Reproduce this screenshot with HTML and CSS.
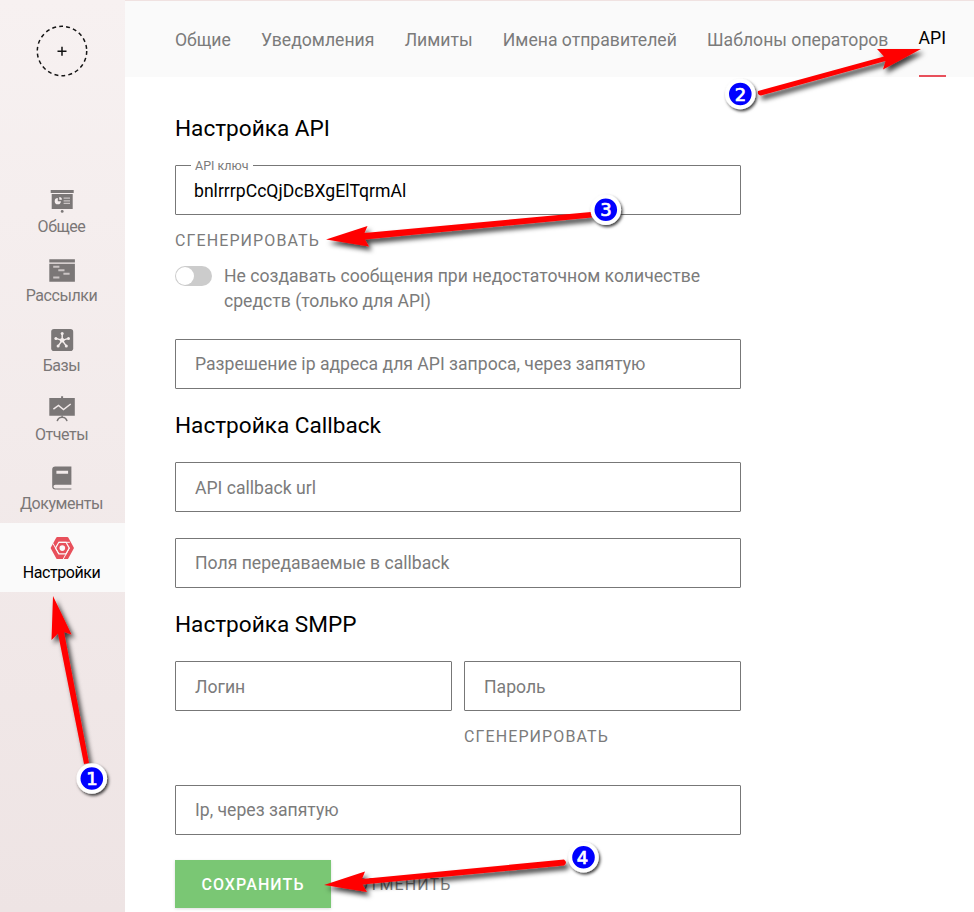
FILE: index.html
```html
<!DOCTYPE html>
<html lang="ru">
<head>
<meta charset="utf-8">
<title>Настройки — API</title>
<link rel="stylesheet" href="styles.css">
</head>
<body>
<div class="app">
  <aside class="sidebar">
    <button class="add" aria-label="Добавить">
      <svg width="52" height="52" viewBox="0 0 52 52"><circle cx="26" cy="26" r="24.7" fill="none" stroke="#151515" stroke-width="1.5" stroke-dasharray="3.9 3.15"/><path d="M21.5 26.3h9M26 21.8v9" stroke="#111" stroke-width="1.5"/></svg>
    </button>
    <nav class="menu">
      <a class="item">
        <svg width="26" height="26" viewBox="0 0 26 26"><path fill="#7b7777" d="M1.7 2h23v3h-23zM2.700 6h21v15h-21z"/><circle cx="13.200" cy="23.400" r="1.400" fill="#7b7777"/><path fill="#f5eeee" d="M8.8 10.1v3.1h3.1a3.1 3.1 0 1 1-3.1-3.1zM10.3 9a2.7 2.7 0 0 1 2.6 2.8h-2.6z"/><path d="M14.600 10.200H21M14.600 12.800H21M14.600 15.400H21" stroke="#c9c3c3" stroke-width="1.3"/></svg>
        <span>Общее</span>
      </a>
      <a class="item">
        <svg width="26" height="26" viewBox="0 0 26 26"><path fill="#7b7777" d="M.3 2.200h25.600v3.300H.3zM.3 6.800h25.600v18H.3z"/><path d="M4.200 9.700h6.200M9.300 13.200h6.200M14.400 16.700h6.200M4.200 20.500h6.200" stroke="#cbc5c5" stroke-width="1.9"/></svg>
        <span>Рассылки</span>
      </a>
      <a class="item">
        <svg width="26" height="26" viewBox="0 0 26 26"><rect x="2.200" y="2" width="22" height="22" rx="2.800" fill="#7b7777"/><path d="M13.200 13.400V6.500M13.200 13.400l-6.300-2M13.200 13.400l6.300-2M13.200 13.400l-4 5.500M13.200 13.400l4 5.500" stroke="#f4edec" stroke-width="1.500"/><g fill="#f4edec"><circle cx="13.200" cy="13.200" r="2.300"/><circle cx="13.200" cy="6.500" r="1.500"/><circle cx="6.900" cy="11.400" r="1.500"/><circle cx="19.500" cy="11.400" r="1.500"/><circle cx="9.100" cy="19" r="1.500"/><circle cx="17.300" cy="19" r="1.500"/></g></svg>
        <span>Базы</span>
      </a>
      <a class="item">
        <svg width="26" height="26" viewBox="0 0 26 26"><path fill="#7b7777" d="M12.100.2h2V2h11.700v17.700H.3V2h11.800z"/><path d="M4.400 13.100l5.100-3.700 5 4.100 7.200-5.500" fill="none" stroke="#f1eaea" stroke-width="1.500"/><path d="M13.100 19.500v2M8.200 25.200c.6-2.600 2.500-4 4.900-4s4.300 1.400 4.900 4" fill="none" stroke="#7b7777" stroke-width="1.500"/></svg>
        <span>Отчеты</span>
      </a>
      <a class="item">
        <svg width="26" height="26" viewBox="0 0 26 26"><path fill="#7b7777" fill-rule="evenodd" d="M6.200 1.400h16.200v18.400H6.400c-1.300 0-1.900.9-1.900 1.800 0 1.300.8 1.900 1.900 1.900h16v1H6.200c-1.900 0-3-1.200-3-3V4.300c0-1.800 1.100-2.900 3-2.900zM7.400 5.700v3h11.700v-3z"/></svg>
        <span>Документы</span>
      </a>
      <a class="item active">
        <svg width="26" height="26" viewBox="0 0 26 26"><path fill="#e8505b" stroke="#e8505b" stroke-width="2" stroke-linejoin="round" d="M8.200 3h10.200l5.500 10-5.500 10H8.200L2.700 13z"/><path d="M9.800 7.300h7.200l3.300 5.800-3.300 5.800H9.800L6.500 13.100z" fill="none" stroke="#fafafa" stroke-width="1.200"/><path d="M9.800 7.300h11M20.300 13.100l-6 10.900M9.800 18.900L3.900 8.300" fill="none" stroke="#fafafa" stroke-width="1"/><circle cx="13.300" cy="13.100" r="2.800" fill="#fafafa"/></svg>
        <span>Настройки</span>
      </a>
    </nav>
  </aside>
  <main class="main">
    <nav class="tabs">
      <a>Общие</a><a>Уведомления</a><a>Лимиты</a><a>Имена отправителей</a><a>Шаблоны операторов</a><a class="current">API</a>
    </nav>
    <form class="form">
      <h2>Настройка API</h2>
      <div class="field filled"><span class="legend">API ключ</span>bnlrrrpCcQjDcBXgElTqrmAl</div>
      <a class="link key-link">СГЕНЕРИРОВАТЬ</a>
      <div class="toggle-row">
        <span class="switch"></span>
        <span>Не создавать сообщения при недостаточном количестве<br>средств (только для API)</span>
      </div>
      <div class="field">Разрешение ip адреса для API запроса, через запятую</div>
      <h2 class="callback-title">Настройка Callback</h2>
      <div class="field low">API callback url</div>
      <div class="field spaced">Поля передаваемые в callback</div>
      <h2 class="smpp-title">Настройка SMPP</h2>
      <div class="pair">
        <div class="field low">Логин</div>
        <div>
          <div class="field low">Пароль</div>
          <a class="link">СГЕНЕРИРОВАТЬ</a>
        </div>
      </div>
      <div class="field ip">Ip, через запятую</div>
      <div class="actions"><button type="button" class="save">СОХРАНИТЬ</button><a class="link cancel">ОТМЕНИТЬ</a></div>
    </form>
  </main>
  <svg class="notes" width="974" height="912" viewBox="0 0 974 912">
    <defs>
      <filter id="shadow" x="-30%" y="-60%" width="170%" height="240%"><feDropShadow dx="3" dy="4" stdDeviation="2.5" flood-color="#000" flood-opacity=".75"/></filter>
      <filter id="soft" x="-40%" y="-40%" width="190%" height="190%"><feDropShadow dx="1.5" dy="2" stdDeviation="1.8" flood-color="#000" flood-opacity=".75"/></filter>
    </defs>
    <g fill="#f00" filter="url(#shadow)">
      <path d="M53 596L71.500 634.500L64 632L89 763L84 764L58 633.500L51.500 640z"/>
      <path d="M921 49L883 69.500L885.500 61L761 95.500Q757 95 758 91L884 56.500L877 49z"/>
      <path d="M326 239.500L367.500 226L364.500 233L591 212L592 217.500L365 239.500L369 246.500z"/>
      <path d="M324 885L365 871.500L362 879L564 859.500Q568 862.500 564 865.500L362.500 884.500L367 892z"/>
    </g>
    <g fill="#00f" stroke="#fff" stroke-width="4" filter="url(#soft)">
      <circle cx="91.800" cy="778.500" r="13.300"/><circle cx="740.300" cy="94" r="13.300"/><circle cx="605.800" cy="209.700" r="13.300"/><circle cx="583.500" cy="857.300" r="13.300"/>
    </g>
    <g class="numbers"><text x="92" y="785">1</text><text x="740.500" y="100.500">2</text><text x="606" y="216">3</text><text x="582.500" y="863.500">4</text></g>
  </svg>
</div>
</body>
</html>
```
FILE: styles.css
```css
* { box-sizing: border-box; }
body { margin: 0; background: #fff; font-family: Roboto, "Liberation Sans", sans-serif; color: #7b7b7b; overflow: hidden; }
.app { position: relative; display: flex; width: 974px; height: 912px; overflow: hidden; }
.sidebar { width: 125px; flex: none; background: linear-gradient(#f7f1f1, #eee4e4); display: flex; flex-direction: column; align-items: center; padding-top: 25px; }
.add { border: 0; background: none; padding: 0; width: 52px; height: 52px; margin-right: 2px; }
.add svg, .item svg { display: block; }
.menu { width: 100%; margin-top: 99px; }
.item { height: 69.300px; display: flex; flex-direction: column; align-items: center; padding: 12px 2px 0 0; font-size: 16px; letter-spacing: -.45px; line-height: 20px; color: #7b7777; }
.item svg { margin-bottom: 3px; }
.item.active { margin-top: 1px; height: 69px; background: #fafafa; color: #000; }
.item.active svg { margin-bottom: 2px; }
.main { flex: 1; min-width: 0; }
.tabs { height: 77px; border-top: 1px solid #f0e2e1; background: #fafafa; display: flex; gap: 30.200px; padding-left: 50px; font-size: 17.620px; line-height: 78px; white-space: nowrap; }
.tabs .current { color: #000; border-bottom: 2px solid #e8505b; line-height: 75px; }
.form { width: 566px; margin-left: 50px; padding-top: 37px; }
h2 { margin: 0; font-size: 22.600px; font-weight: 400; line-height: 30px; color: #000; }
.field { position: relative; height: 50px; border: 1px solid #777; border-radius: 1px; padding-left: 19px; font-size: 17.620px; line-height: 49px; margin-top: 21px; white-space: nowrap; }
.filled { color: #000; padding-left: 18px; }
.filled, .low { line-height: 50px; }
.legend { position: absolute; left: 15px; top: -10px; padding: 0 4px; background: #fff; color: #7b7b7b; font-size: 12.500px; line-height: 20px; }
.link { display: block; font-size: 16px; line-height: 20px; letter-spacing: 1.100px; color: #7b7b7b; }
.key-link { margin-top: 16px; }
.toggle-row { display: flex; gap: 12px; margin-top: 13px; font-size: 17.600px; line-height: 25px; white-space: nowrap; }
.switch { width: 37px; height: 20px; border-radius: 10px; background: #ccc; padding: 1px; margin-top: 2px; }
.switch::before { content: ""; display: block; width: 18px; height: 18px; border-radius: 50%; background: #fff; }
.toggle-row + .field { margin-top: 25px; }
.callback-title { margin-top: 22px; }
.spaced { margin-top: 26px; }
.smpp-title { margin-top: 22px; }
.pair { display: grid; grid-template-columns: 1fr 1fr; gap: 12px; }
.pair .link { margin-top: 16px; }
.ip { margin-top: 38px; }
.actions { display: flex; align-items: center; margin-top: 25px; }
.save { width: 156px; height: 48px; border: 0; padding: 2px 0 0; background: #7ac774; color: #fff; font: 500 16px/46px Roboto, sans-serif; letter-spacing: 1.100px; box-shadow: 0 1px 3px #0002; }
.cancel { margin-left: 26px; padding-top: 2px; }
.notes { position: absolute; inset: 0; pointer-events: none; }
.numbers { font: 400 18px "DejaVu Sans", sans-serif; fill: #fff; stroke: #fff; stroke-width: .7px; text-anchor: middle; }
```
